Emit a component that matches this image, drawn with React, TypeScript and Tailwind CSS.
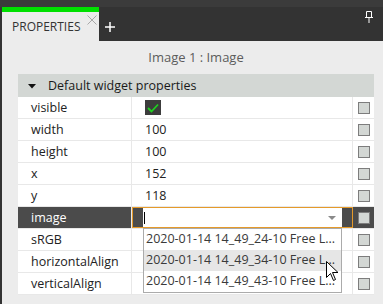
import React from 'react';

const rows = [
  { name: 'visible', value: 'check' },
  { name: 'width', value: '100' },
  { name: 'height', value: '100' },
  { name: 'x', value: '152' },
  { name: 'y', value: '118' },
  { name: 'image', value: 'edit' },
  { name: 'sRGB', value: '' },
  { name: 'horizontalAlign', value: '' },
  { name: 'verticalAlign', value: '' },
];

const files = [
  '2020-01-14 14_49_24-10 Free L...',
  '2020-01-14 14_49_34-10 Free L...',
  '2020-01-14 14_49_43-10 Free L...',
];

function Box() {
  return <div className="w-[12px] h-[12px] border border-[#7d7d7d] bg-[#d3d7d4]" />;
}

function Cursor() {
  return (
    <svg className="absolute left-[182px] top-[32px]" width="13" height="21" viewBox="0 0 13 21">
      <path d="M0.5 0.5 L0.5 16.5 L4.5 12.5 L7.5 19.5 L9.5 18.5 L6.5 11.5 L12 11.5 Z" fill="#fff" stroke="#000" strokeWidth="1" />
    </svg>
  );
}

export default function App() {
  return (
    <div className="w-[383px] h-[304px] bg-[#333] flex flex-col text-[12.5px] text-[#222]" style={{ fontFamily: '"Open Sans", "Noto Sans", sans-serif' }}>
      <div className="h-[7px] bg-[#3b3b3b]" />
      <div className="h-[34px] flex items-stretch">
        <div className="ml-[2px] w-[97px] bg-[#ececec] border-t-[5px] border-[#00e000] relative">
          <span className="absolute left-[10px] top-[6px] text-[12px] text-[#333]">PROPERTIES</span>
          <svg className="absolute left-[85px] top-[3px]" width="10" height="10" viewBox="0 0 10 10">
            <path d="M0.5 0.5 L9.5 9.5 M9.5 0.5 L0.5 9.5" stroke="#a8a8a8" strokeWidth="1" />
          </svg>
        </div>
        <div className="w-[20px] flex items-center justify-center ml-[1px] pt-[5px]">
          <svg width="10" height="10" viewBox="0 0 10 10">
            <path d="M5 0 V10 M0 5 H10" stroke="#fff" strokeWidth="1.5" />
          </svg>
        </div>
        <div className="flex-1" />
        <div className="w-[18px] pt-[4px]">
          <svg width="8" height="12" viewBox="0 0 8 12">
            <path d="M1.5 0.5 H6.5 V6.5 H1.5 Z M0 6.5 H8 M4 6.5 V12" stroke="#fff" strokeWidth="1" fill="none" />
          </svg>
        </div>
      </div>
      <div className="flex-1 bg-[#ececec] ml-[2px] pl-[16px] pr-[9px]">
        <div className="h-[33px] flex items-center justify-center text-[13px] text-[#5c5c5c]">Image 1 : Image</div>
        <div className="h-[23px] bg-[#d3d7d4] flex items-center pt-[2px]">
          <svg className="ml-[10px] mb-[1px]" width="8" height="5" viewBox="0 0 8 5">
            <path d="M0 0 H8 L4 4.5 Z" fill="#111" />
          </svg>
          <span className="ml-[12px] text-[#1a1a1a]">Default widget properties</span>
        </div>
        {rows.map(r => {
          const sel = r.value === 'edit';
          return (
            <div key={r.name} className={`h-[22px] flex border-b border-[#e8e8e8] relative ${sel ? 'bg-[#4b4b4b]' : 'bg-white'}`}>
              <div className={`w-[114px] border-r border-[#e8e8e8] pl-[13px] pt-[1px] flex items-center whitespace-nowrap ${sel ? 'text-white border-[#4b4b4b]' : ''}`}>{r.name}</div>
              {sel ? (
                <div className="w-[221px] border border-[#e59a2a] flex items-stretch">
                  <div className="w-[10px] bg-[#4b4b4b]" />
                  <div className="flex-1 bg-white flex items-center pl-[1px]">
                    <div className="w-[1px] h-[12px] bg-black" />
                    <div className="flex-1" />
                    <svg className="mr-[6px]" width="8" height="4" viewBox="0 0 8 4">
                      <path d="M0 0 H8 L4 4 Z" fill="#8a8a8a" />
                    </svg>
                  </div>
                  <div className="w-[10px] bg-[#4b4b4b]" />
                </div>
              ) : (
                <div className="w-[221px] border-r border-[#e8e8e8] pl-[13px] flex items-center">
                  {r.value === 'check' ? (
                    <div className="w-[16px] h-[15px] bg-[#3c3c3c] flex items-center justify-center">
                      <svg width="12" height="10" viewBox="0 0 12 10">
                        <path d="M1 5 L4.5 8.5 L11 1.5" stroke="#1fd11f" strokeWidth="1.8" fill="none" />
                      </svg>
                    </div>
                  ) : (
                    <span className="pt-[1px]">{r.value}</span>
                  )}
                </div>
              )}
              <div className="flex-1 flex items-center justify-center">
                <Box />
              </div>
              {sel && (
                <div className="absolute left-[125px] top-[21px] w-[199px] bg-white border border-[#ababab] z-10">
                  {files.map((f, i) => (
                    <div key={f} className={`h-[21px] flex items-center pl-[2px] text-[#3a3a3a] whitespace-nowrap overflow-hidden ${i === 1 ? 'bg-[#e6e6e6]' : ''}`}>{f}</div>
                  ))}
                  <Cursor />
                </div>
              )}
            </div>
          );
        })}
      </div>
    </div>
  );
}
